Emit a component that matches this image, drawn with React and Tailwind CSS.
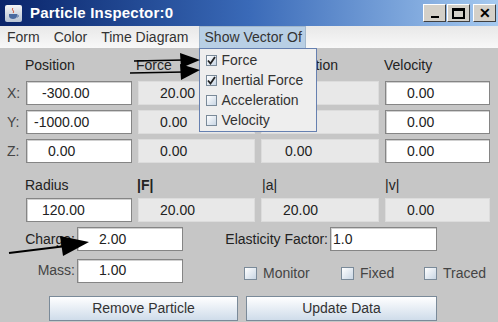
import React from "react";

// campo di testo bianco (editabile) o grigio (sola lettura)
function Field({ value, pad = "pl-[21px]", gray = false, w = "" }) {
  return (
    <div
      className={`h-[24px] ${w} flex items-center ${pad} text-[14px] text-[#222] ${
        gray
          ? "bg-[#e8e8e8] border border-[#dcdcdc]"
          : "bg-white border border-[#858585] shadow-[inset_1px_1px_0_#d0d0d0]"
      }`}
    >
      {value}
    </div>
  );
}

function Check({ checked = false, small = false }) {
  return (
    <div
      className={`${small ? "w-[11px] h-[11px]" : "w-[13px] h-[13px]"} border border-[#7a8a99] bg-gradient-to-br from-white to-[#c9d6e4] flex items-center justify-center`}
    >
      {checked && (
        <svg width="9" height="9" viewBox="0 0 9 9">
          <path d="M1 4.5 L3.5 7.5 L8 1" stroke="#222" strokeWidth="1.8" fill="none" />
        </svg>
      )}
    </div>
  );
}

const menuItems = [
  { label: "Force", checked: true },
  { label: "Inertial Force", checked: true },
  { label: "Acceleration", checked: false },
  { label: "Velocity", checked: false },
];

const rows = [
  { l: "X:", p: "-300.00", pp: "pl-[15px]", f: "20.00", a: "", v: "0.00" },
  { l: "Y:", p: "-1000.00", pp: "pl-[7px]", f: "0.00", a: "", v: "0.00" },
  { l: "Z:", p: "0.00", pp: "pl-[21px]", f: "0.00", a: "0.00", v: "0.00" },
];

export default function App() {
  return (
    <div className="relative w-[498px] h-[322px] overflow-hidden bg-[#c6c6c6] flex flex-col font-['Liberation_Sans',Arial,sans-serif]">
      {/* barra del titolo */}
      <div className="h-[26px] flex items-center bg-gradient-to-r from-[#0a246a] via-[#3a6ab8] to-[#a6caf0] pl-[5px] pr-[2px]">
        <div className="w-[17px] h-[17px] rounded-[2px] bg-gradient-to-b from-[#f4f4f4] to-[#b8c4d4] flex items-center justify-center">
          <svg width="13" height="13" viewBox="0 0 13 13">
            <path d="M6 1 C4 3 8 4 6 6" stroke="#d04020" strokeWidth="1" fill="none" />
            <path d="M2 7 H10 V9 C10 11 8 12 6 12 C4 12 2 11 2 9 Z" fill="#4a6aa0" />
            <path d="M10 8 C12 8 12 10 10 10" stroke="#4a6aa0" strokeWidth="1" fill="none" />
          </svg>
        </div>
        <span className="ml-[8px] text-white font-bold text-[15px] tracking-[0.2px]">Particle Inspector:0</span>
        <div className="ml-auto flex items-center gap-[1px]">
          <div className="w-[23px] h-[18px] bg-[#d4d0c8] border border-t-white border-l-white border-r-[#404040] border-b-[#404040] flex items-end justify-center pb-[3px]">
            <div className="w-[8px] h-[2px] bg-black" />
          </div>
          <div className="w-[23px] h-[18px] bg-[#d4d0c8] border border-t-white border-l-white border-r-[#404040] border-b-[#404040] flex items-center justify-center mr-[2px]">
            <div className="w-[13px] h-[11px] border-2 border-black border-t-[3px]" />
          </div>
          <div className="w-[23px] h-[18px] bg-[#d4d0c8] border border-t-white border-l-white border-r-[#404040] border-b-[#404040] flex items-center justify-center">
            <span className="text-[14px] font-bold leading-none text-black">✕</span>
          </div>
        </div>
      </div>

      {/* barra dei menu */}
      <div className="h-[22px] flex items-stretch bg-gradient-to-b from-[#e8e8e8] to-[#f8f8f8] text-[14px] text-[#333]">
        <div className="px-[7px] flex items-center">Form</div>
        <div className="px-[7px] flex items-center">Color</div>
        <div className="px-[7px] flex items-center">Time Diagram</div>
        <div className="relative ml-[3px] pl-[5px] pr-[3px] flex items-center bg-[#b8cfe5] border border-[#a3b8cc] border-b-0">
          Show Vector Of
          <div className="absolute left-[-1px] top-full w-[118px] z-10 bg-[#eeeeee] border border-[#6680b0] py-[1px]">
            {menuItems.map((m) => (
              <div key={m.label} className="h-[20px] flex items-center pl-[6px] gap-[5px]">
                <Check small checked={m.checked} />
                <span>{m.label}</span>
              </div>
            ))}
          </div>
        </div>
      </div>

      {/* contenuto */}
      <div className="flex flex-col text-[14px] text-[#222]">
        <div className="mt-[7px] grid grid-cols-[20px_106px_117px_118px_105px] gap-x-[6px] h-[20px] items-center">
          <div />
          <div className="-ml-[1px]">Position</div>
          <div className="-ml-[2px]">Force</div>
          <div>Acceleration</div>
          <div className="-ml-[1px]">Velocity</div>
        </div>

        <div className="mt-[6px] flex flex-col gap-[5px]">
          {rows.map((r) => (
            <div key={r.l} className="grid grid-cols-[20px_106px_117px_118px_105px] gap-x-[6px] items-center">
              <div className="pl-[7px] text-[#444]">{r.l}</div>
              <Field value={r.p} pad={r.pp} />
              <Field value={r.f} gray />
              <Field value={r.a} gray pad="pl-[23px]" />
              <Field value={r.v} />
            </div>
          ))}
        </div>

        <div className="mt-[12px] grid grid-cols-[20px_106px_117px_118px_105px] gap-x-[6px] h-[20px] items-center">
          <div />
          <div className="-ml-[1px]">Radius</div>
          <div className="-ml-[1px] font-bold">|F|</div>
          <div className="ml-[1px]">|a|</div>
          <div>|v|</div>
        </div>

        <div className="mt-[3px] grid grid-cols-[20px_106px_117px_118px_105px] gap-x-[6px] items-center">
          <div />
          <Field value="120.00" pad="pl-[15px]" />
          <Field value="20.00" gray />
          <Field value="20.00" gray />
          <Field value="0.00" gray />
        </div>

        <div className="mt-[5px] flex items-center">
          <div className="w-[75px] text-right">Charge:</div>
          <Field value="2.00" w="ml-[2px] w-[106px]" />
          <div className="w-[147px] text-right pr-[2px]">Elasticity Factor:</div>
          <Field value="1.0" pad="pl-[2px]" w="w-[107px]" />
        </div>

        <div className="mt-[6px] flex items-center">
          <div className="w-[75px] text-right text-[#444]">Mass:</div>
          <Field value="1.00" w="ml-[2px] w-[106px]" />
          <div className="ml-[61px] pt-[6px] w-[97px] flex items-center gap-[6px]">
            <Check />
            <span className="text-[#444]">Monitor</span>
          </div>
          <div className="w-[83px] pt-[6px] flex items-center gap-[6px]">
            <Check />
            <span className="text-[#444]">Fixed</span>
          </div>
          <div className="pt-[6px] flex items-center gap-[6px]">
            <Check />
            <span className="text-[#444]">Traced</span>
          </div>
        </div>

        <div className="mt-[12px] flex ml-[49px] gap-[8px]">
          <button className="w-[189px] h-[25px] border border-[#7a8a99] bg-gradient-to-b from-white to-[#cfdcea] text-[14px] text-[#333]">
            Remove Particle
          </button>
          <button className="w-[191px] h-[25px] border border-[#7a8a99] bg-gradient-to-b from-white to-[#cfdcea] text-[14px] text-[#333]">
            Update Data
          </button>
        </div>
      </div>

      {/* frecce disegnate sopra lo screenshot */}
      <svg className="absolute inset-0 pointer-events-none z-20" width="498" height="322">
        <line x1="134" y1="61" x2="184" y2="60" stroke="#000" strokeWidth="1.3" />
        <polygon points="200,60 180,53 181,68" fill="#000" />
        <line x1="130" y1="73" x2="184" y2="72" stroke="#000" strokeWidth="1.3" />
        <polygon points="200,70 180,64 181,80" fill="#000" />
        <line x1="9" y1="253" x2="66" y2="246" stroke="#000" strokeWidth="2.2" />
        <polygon points="89,242 60,236 63,256" fill="#000" />
      </svg>
    </div>
  );
}
